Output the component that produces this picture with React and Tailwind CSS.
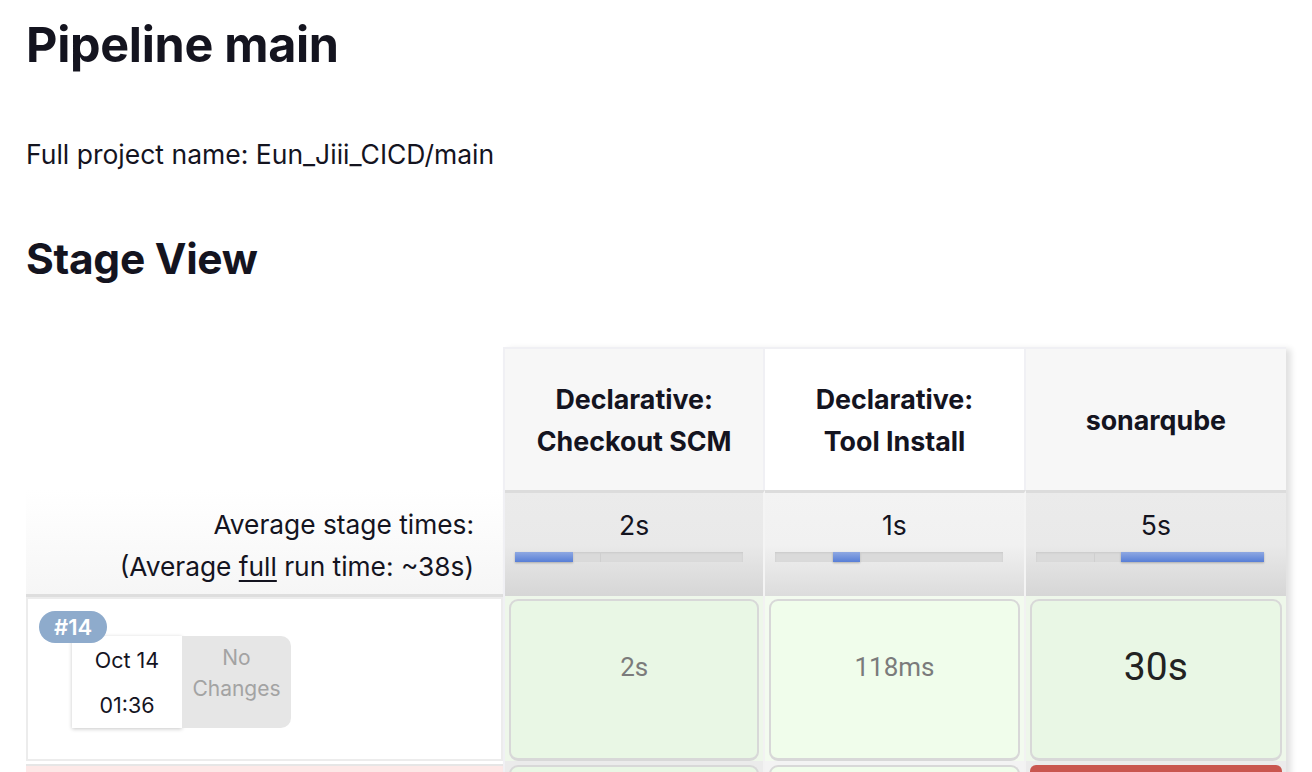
const stages = [
  { name: ['Declarative:', 'Checkout SCM'], avg: '2s', head: 'bg-[#f7f7f7]', avgBg: 'from-[#ebebeb] via-[#e9e9e9] to-[#d6d6d6]', seg: 0 },
  { name: ['Declarative:', 'Tool Install'], avg: '1s', head: 'bg-white', avgBg: 'from-[#f3f3f3] via-[#f1f1f1] to-[#dcdcdc]', seg: 1 },
  { name: ['sonarqube'], avg: '5s', head: 'bg-[#f7f7f7]', avgBg: 'from-[#ebebeb] via-[#e9e9e9] to-[#d6d6d6]', seg: 2 }
]

const segments = [58, 27, 143]

const runCells = [
  { text: '2s', box: 'bg-[#e9f7e5]', outer: 'bg-[#eef7ea]', big: false },
  { text: '118ms', box: 'bg-[#f0fdeb]', outer: 'bg-[#f3fbef]', big: false },
  { text: '30s', box: 'bg-[#e9f7e5]', outer: 'bg-[#eef7ea]', big: true }
]

function TimeBar({ active }) {
  return (
    <div className="flex h-[10px] w-[228px] bg-[#dadada] shadow-[inset_0_1px_2px_rgba(0,0,0,0.08)]">
      {segments.map((w, i) => (
        <div
          key={i}
          style={{ width: w }}
          className={
            i === active
              ? 'h-full bg-gradient-to-b from-[#8ea8e2] to-[#587ed6] shadow-[0_1px_2px_rgba(0,0,0,0.25)]'
              : 'h-full border-l border-[#cfcfcf] first:border-l-0'
          }
        ></div>
      ))}
    </div>
  )
}

function App() {
  return (
    <div className="h-[772px] overflow-hidden bg-white pl-[26px] pt-[13px] text-[#14141f] font-['Inter','Liberation_Sans',sans-serif]">
      <h1 className="text-[48.5px] font-bold leading-[64px] tracking-[-0.3px]">Pipeline main</h1>
      <p className="mt-[61px] text-[26.5px] leading-[32px]">Full project name: Eun_Jiii_CICD/main</p>
      <h2 className="mt-[63px] text-[42.5px] font-bold leading-[52px] tracking-[-0.3px]">Stage View</h2>

      <div className="mt-[62px] flex">
        {/* left column: summary + build labels */}
        <div className="flex w-[477px] flex-col">
          <div className="h-[143px]"></div>
          <div className="flex h-[104px] flex-col items-end justify-center bg-gradient-to-b from-white to-[#f6f6f6] pr-[29px] pt-[8px] text-[26.3px] leading-[42px]">
            <div>Average stage times:</div>
            <div>
              (Average <span className="underline underline-offset-[4px]">full</span> run time: ~38s)
            </div>
          </div>
          <div className="h-[3px] bg-[#dedede]"></div>
          <div className="relative h-[164px] border-2 border-[#ececec] bg-white">
            <div className="absolute left-[11px] top-[12px] z-10 rounded-full bg-[#8eabcc] px-[15px] text-[22px] font-semibold leading-[32px] text-white">
              #14
            </div>
            <div className="absolute left-[44px] top-[37px] flex">
              <div className="flex h-[92px] w-[110px] flex-col items-center bg-white pt-[10px] text-[21.5px] shadow-[0_1px_4px_rgba(0,0,0,0.22)]">
                <div className="leading-[28px]">Oct 14</div>
                <div className="mt-[17px] leading-[28px]">01:36</div>
              </div>
              <div className="flex h-[92px] w-[109px] flex-col items-center rounded-r-[10px] bg-[#e6e6e6] pt-[6px] text-[21px] leading-[31px] text-[#a3a3a3]">
                <div>No</div>
                <div>Changes</div>
              </div>
            </div>
          </div>
          <div className="mt-[3px] h-[40px] border-t-2 border-[#e6e6e6] bg-[#fde8e7]"></div>
        </div>

        {/* stage columns */}
        <div className="flex w-[783px] flex-col border-l-2 border-t-2 border-[#f0f0f4] shadow-[5px_2px_6px_rgba(0,0,0,0.12)]">
          <div className="flex h-[141px]">
            {stages.map((s, i) => (
              <div
                key={i}
                className={`flex w-[261px] flex-col items-center justify-center border-r-2 border-[#f0f0f4] text-center text-[26.8px] font-bold leading-[42px] last:border-r-0 ${s.head}`}
              >
                {s.name.map((l) => (
                  <div key={l}>{l}</div>
                ))}
              </div>
            ))}
          </div>
          <div className="flex h-[106px]">
            {stages.map((s, i) => (
              <div
                key={i}
                className={`flex w-[261px] flex-col border-r-2 border-t-[3px] border-r-[#f4f4f4] border-t-[#dcdcdc] bg-gradient-to-b last:border-r-0 ${s.avgBg}`}
              >
                <div className="pt-[16px] text-center text-[26.5px] leading-[32px]">{s.avg}</div>
                <div className="mt-[11px] pl-[10px]">
                  <TimeBar active={s.seg} />
                </div>
              </div>
            ))}
          </div>
          <div className="flex">
            {runCells.map((c, i) => (
              <div key={i} className={`w-[261px] border-r-2 border-[#f2f2f2] px-[4px] pt-[3px] last:border-r-0 ${c.outer}`}>
                <div
                  className={`flex h-[162px] items-center justify-center rounded-[9px] border-2 border-b-[3px] border-[#d8d8d8] pb-[24px] font-['Roboto','Liberation_Sans',sans-serif] ${c.box} ${
                    c.big ? 'text-[39px] text-[#222]' : 'text-[26px] text-[#7b7b7b]'
                  }`}
                >
                  {c.text}
                </div>
              </div>
            ))}
          </div>
          <div className="flex h-[40px]">
            <div className="w-[261px] border-r-2 border-[#f2f2f2] bg-[#ebebeb] px-[4px] pt-[4px]">
              <div className="h-full rounded-t-[9px] border-2 border-b-0 border-[#d8d8d8] bg-[#e9f7e5]"></div>
            </div>
            <div className="w-[261px] border-r-2 border-[#f2f2f2] bg-[#f3f3f3] px-[4px] pt-[4px]">
              <div className="h-full rounded-t-[9px] border-2 border-b-0 border-[#d8d8d8] bg-[#f0fdeb]"></div>
            </div>
            <div className="w-[261px] bg-[#ebebeb] px-[4px] pt-[4px]">
              <div className="h-full rounded-t-[6px] bg-[#c9564f]"></div>
            </div>
          </div>
        </div>
      </div>
    </div>
  )
}

export default App
